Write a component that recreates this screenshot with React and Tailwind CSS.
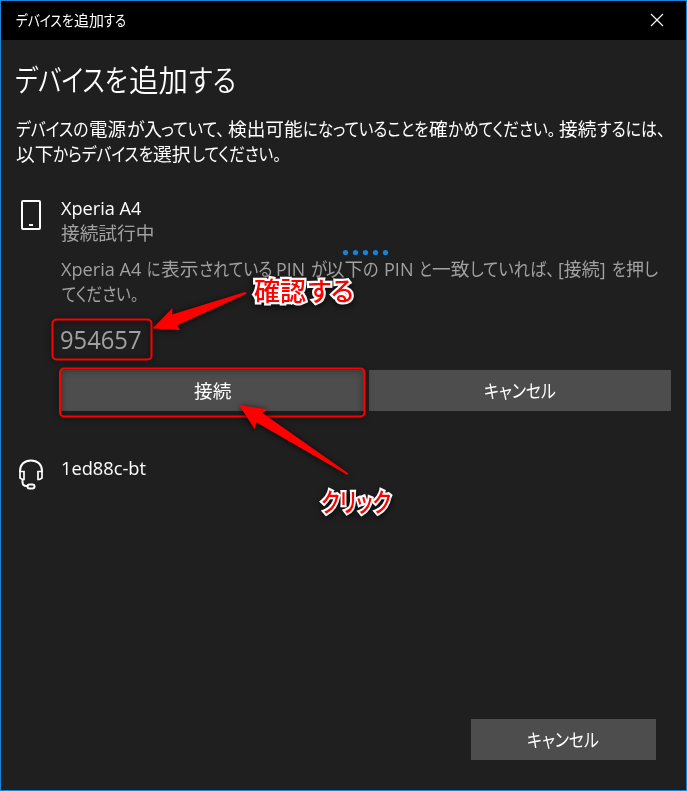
import React, { useLayoutEffect, useRef } from "react";

// A run of glyphs condensed horizontally so that it fills exactly `w` pixels.
function Run({ t, w, gap = 0, className = "" }) {
  const ref = useRef(null);
  useLayoutEffect(() => {
    const el = ref.current;
    el.style.transform = "none";
    const natural = el.getBoundingClientRect().width;
    if (natural) el.style.transform = `scaleX(${w / natural})`;
  }, [t, w]);
  return (
    <span className="block shrink-0 whitespace-pre" style={{ width: w, marginLeft: gap }}>
      <span ref={ref} className={"inline-block origin-left " + className}>{t}</span>
    </span>
  );
}

// `runs` holds [text, start, end] in pixels from the line's left edge.
function Line({ runs, className = "", runClass = "" }) {
  return (
    <div className={"flex " + className}>
      {runs.map(([t, s, e], i) => (
        <Run key={i} t={t} w={e - s} gap={s - (i ? runs[i - 1][2] : 0)} className={runClass} />
      ))}
    </div>
  );
}

const CANCEL = [["キャンセル", 0, 72]];

export default function App() {
  return (
    <div className="relative flex h-[791px] w-[687px] flex-col overflow-hidden border border-[#1883d7] bg-[#1f1f1f] font-['Open_Sans','Noto_Sans_CJK_JP',sans-serif] text-[18.67px] leading-[25px] text-white [font-feature-settings:'palt']">
      <header className="flex h-[39px] shrink-0 items-center justify-between bg-black pb-[2px] pl-[15px] pr-[22px]">
        <Line className="text-[15px] leading-5" runs={[["デバイスを", 0, 57.5], ["追加", 57.5, 87.5], ["する", 88, 110]]} />
        <svg width="14" height="14" viewBox="0 0 14 14" stroke="#fff" strokeWidth="1.1">
          <path d="M1 1 13 13M13 1 1 13" />
        </svg>
      </header>

      <main className="flex flex-1 flex-col">
        <h1 className="ml-[14px] mt-[20px] h-10 text-[30px] font-[350] leading-10">
          <Line runs={[["デバイスを", -0.5, 112], ["追加", 114, 173], ["する", 174, 221]]} />
        </h1>
        <div className="ml-[15px] mt-[16px]">
          <Line
            runs={[
              ["デバイスの", 0, 72.5],
              ["電源", 73, 110],
              ["が", 110.5, 128],
              ["入", 128, 146],
              ["っていて、", 145, 208.5],
              ["検出可能", 212.2, 286.9],
              ["になっていることを", 287.5, 413],
              ["確", 413, 431.6],
              ["かめてください。", 432, 539.5],
              ["接続", 543, 580.3],
              ["するには、", 581, 649],
            ]}
          />
          <Line runs={[["以下", -0.5, 36.8], ["からデバイスを", 36.8, 137], ["選択", 137.5, 175], ["してください。", 176, 265]]} />
        </div>

        <section className="mt-[29px] flex">
          <svg className="ml-[19px] mt-[5px]" width="22" height="31" viewBox="0 0 22 31" fill="none" stroke="#fff" strokeWidth="2">
            <rect x="2" y="1" width="18" height="28" rx="1" />
            <path d="M9 25h4" />
          </svg>
          <div className="ml-[19px] flex flex-col">
            <Line runs={[["Xperia A4", 0, 80.5]]} />
            <Line className="text-[#a1a1a1]" runs={[["接続試行中", 0, 93.3]]} />
            <div className="mt-[11px] text-[#a1a1a1]">
              <Line
                runs={[
                  ["Xperia A4", 0, 80.5],
                  ["に", 86, 99.5],
                  ["表示", 99.5, 137],
                  ["されている", 137.5, 211],
                  ["PIN", 214.5, 243.5],
                  ["が", 250, 266],
                  ["以下", 265, 302],
                  ["の", 302, 317.5],
                  ["PIN", 323, 352.5],
                  ["と", 358, 371],
                  ["一致", 371, 408.5],
                  ["していれば、", 409, 493.500],
                  ["[接続]", 497, 544.5],
                  ["を", 550.5, 564.5],
                  ["押", 564.5, 582.5],
                  ["し", 582.5, 596.5],
                ]}
              />
              <Line runs={[["てください。", 0.5, 77]]} />
            </div>
            <Line className="mt-[16px] text-[26px] leading-[34px] text-[#a1a1a1]" runs={[["954657", -1.5, 80]]} />
            <div className="mt-[14px] flex h-[41px] gap-[5px]">
              <button className="flex w-[303px] items-center bg-[#4d4d4d] pl-[133px]">
                <Line runs={[["接続", 0, 37.3]]} />
              </button>
              <button className="flex w-[302px] items-center justify-center bg-[#4d4d4d]">
                <Line runs={CANCEL} />
              </button>
            </div>
          </div>
        </section>

        <section className="mt-[44px] flex">
          <svg className="ml-[17px] mt-[4px]" width="26" height="32" viewBox="0 0 26 32" fill="none" stroke="#fff" strokeWidth="2">
            <path d="M2 13V12C2 5.500 6.500 1.500 13 1.500S24 5.500 24 12V13" />
            <path d="M2 12.500H6V20.500H4.500L2 19ZM24 12.500H20V20.500H21.500L24 19Z" strokeWidth="1.700" />
            <path d="M4.500 21V23Q4.500 27 8.500 27H9" />
            <rect x="9.500" y="25.500" width="7" height="4" rx="2" />
          </svg>
          <Line className="ml-[17px]" runs={[["1ed88c-bt", -0.5, 84.5]]} />
        </section>

        <button className="mb-[30px] ml-auto mr-[30px] mt-auto flex h-[41px] w-[185px] items-center justify-center bg-[#4d4d4d] pr-[2px]">
          <Line runs={CANCEL} />
        </button>
      </main>

      <svg className="pointer-events-none absolute -left-px -top-px" width="687" height="791" viewBox="0 0 687 791">
        <g fill="#1883d7">
          <circle cx="345.500" cy="252.500" r="2.600" />
          <circle cx="355.500" cy="252.500" r="2.600" />
          <circle cx="365.500" cy="252.500" r="2.600" />
          <circle cx="375.500" cy="252.500" r="2.600" />
          <circle cx="385.500" cy="252.500" r="2.600" />
        </g>
        <g className="drop-shadow-[0_1px_3px_rgba(0,0,0,0.7)]" fill="none" stroke="#f00" strokeWidth="2">
          <rect x="52.500" y="319.500" width="99" height="40" rx="4" />
          <rect x="60" y="368.500" width="304.500" height="48" rx="4" />
        </g>
        <g className="drop-shadow-[0_1px_3px_rgba(0,0,0,0.7)]" fill="#f00">
          <path d="M152.500 328.500 172.500 308 172 314.500 245 292 247 293.500 177 325.500 180.500 330Z" />
          <path d="M239 405 268 409.500 262.500 413 348.500 473.500 347.500 475 256.500 422.500 254.500 429Z" />
        </g>
      </svg>
      <Line
        className="absolute left-[253px] top-[274px] text-[26px] font-medium leading-8 text-[#f00] [-webkit-text-stroke:4.5px_white] [paint-order:stroke_fill] drop-shadow-[0_2px_3px_rgba(0,0,0,0.7)]"
        runs={[["確認", 0, 52], ["する", 54, 99.5]]}
      />
      <Line
        className="absolute left-[320px] top-[485px] text-[26px] font-medium leading-8 text-[#f00] [-webkit-text-stroke:4.5px_white] [paint-order:stroke_fill] drop-shadow-[0_2px_3px_rgba(0,0,0,0.7)]"
        runs={[["クリック", 0, 70]]}
      />
    </div>
  );
}
